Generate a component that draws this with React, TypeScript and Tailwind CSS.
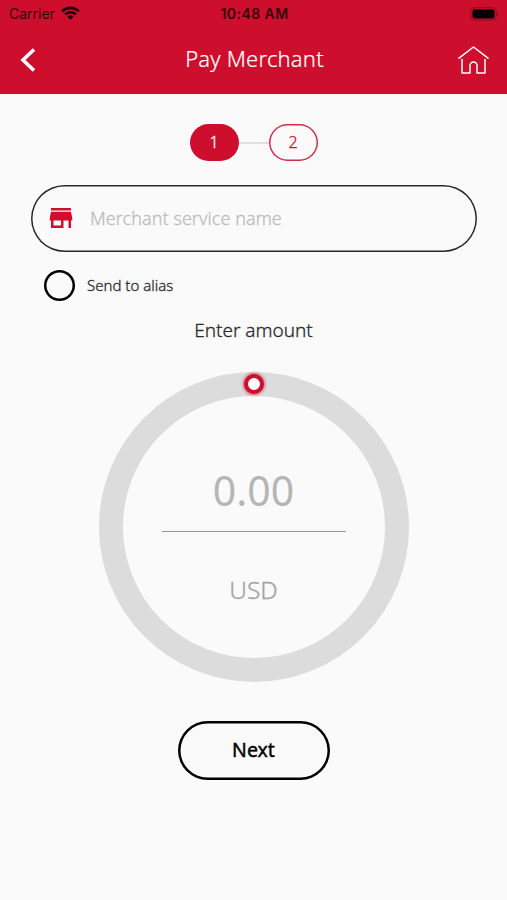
import { MdStore } from 'react-icons/md';
import { clsx } from 'clsx';

const STEPS = [1, 2] as const;

function StatusBar() {
  return (
    <div className="flex h-[27px] items-center justify-between pl-[9px] pr-[7px] font-['Inter',sans-serif] text-[14px] leading-none text-[#35050b]">
      <div className="flex flex-1 items-center gap-[6px]">
        <span>Carrier</span>
        <svg width="19" height="14" viewBox="0 0 19 14" fill="none" stroke="currentColor" strokeWidth="2.6" className="-mt-[2px] text-[#1c0306]">
          <path d="M1.2 5.3a11.8 11.8 0 0 1 16.6 0" />
          <path d="M4.2 8.4a7.5 7.5 0 0 1 10.6 0" />
          <path d="M9.5 13.8 6.5 10.7a4.3 4.3 0 0 1 6 0z" fill="currentColor" stroke="none" />
        </svg>
      </div>
      <span className="pt-px font-semibold tracking-[0.45px]">10:48 AM</span>
      <div className="flex flex-1 justify-end">
        <svg width="30" height="14" viewBox="0 0 30 14">
          <rect x="0.7" y="0.7" width="25.6" height="12.4" rx="3.6" fill="none" stroke="#8c0b20" strokeWidth="1" />
          <rect x="2.5" y="2.5" width="22" height="9" rx="2" fill="#000" />
          <path d="M27.6 4.8q2 2.2 0 4.4z" fill="#8c0b20" />
        </svg>
      </div>
    </div>
  );
}

function Header() {
  return (
    <header className="h-[94px] bg-[#cd0e2c]">
      <StatusBar />
      <div className="flex h-[65px] items-center justify-between pl-[20px] pr-[18px] text-white">
        <button aria-label="Back" className="flex w-[31px]">
          <svg width="16" height="26" viewBox="0 0 16 26" fill="none" stroke="currentColor" strokeWidth="3.6">
            <path d="M14 2.5 3 13l11 10.500" />
          </svg>
        </button>
        <h1 className="pb-[3px] text-[22px] font-light leading-none tracking-[0.2px] [-webkit-text-stroke:0.2px]">Pay Merchant</h1>
        <button aria-label="Home" className="flex w-[31px]">
          <svg width="31" height="30" viewBox="0 0 31 30" fill="none" stroke="currentColor" strokeWidth="1.5" strokeLinecap="round" strokeLinejoin="round">
            <path d="M1 13.2 15.5 2 30 13.2" />
            <path d="M4 14.5v13.5h8V20.5a3.5 3.5 0 0 1 7 0v7.5h8V14.5" />
          </svg>
        </button>
      </div>
    </header>
  );
}

function Stepper({ current }: { current: number }) {
  return (
    <div className="mt-[30px] flex items-center justify-center">
      {STEPS.map((step, i) => (
        <div key={step} className="flex items-center">
          {i > 0 && <div className="h-[2px] w-[30px] bg-[#dedede]" />}
          <div
            className={clsx(
              'flex h-[37px] w-[49px] items-center justify-center rounded-full pb-[2px] text-[16px] font-light leading-none [-webkit-text-stroke:0.3px]',
              step === current ? 'bg-[#cd0e2c] text-white' : 'text-[#cd0e2c] shadow-[inset_0_0_0_1.5px_#d02f49]'
            )}
          >
            {step}
          </div>
        </div>
      ))}
    </div>
  );
}

function AmountDial() {
  return (
    <div className="relative mx-auto mt-[30px] flex h-[310px] w-[310px] flex-col items-center rounded-full border-[24px] border-[#dcdcdc]">
      {/* Drag handle */}
      <div className="absolute -top-[22px] left-[121.5px] h-[20px] w-[20px] rounded-full border-[4px] border-[#cd0e2c] bg-white shadow-[0_0_3px_1px_rgba(205,14,44,0.6)]" />
      <div className="mt-[70px] flex h-[48px] items-center text-[41px] leading-none text-[#b5b5b5]">0.00</div>
      <div className="mt-[17px] h-px w-[184px] bg-[#959595]" />
      <div className="mt-[45px] flex h-[26px] items-center text-[24.5px] font-light leading-none text-[#a3a3a3] [-webkit-text-stroke:0.3px]">USD</div>
    </div>
  );
}

export default function App() {
  return (
    <div className="h-[900px] w-[507px] overflow-hidden bg-[#fafafa] font-['Noto_Sans',sans-serif]">
      <Header />
      <main className="flex flex-col">
        <Stepper current={1} />

        <div className="ml-[31px] mt-[24px] flex h-[67px] w-[446px] items-center rounded-full pb-px pl-[15px] shadow-[inset_0_0_0_1.5px_#2b2728]">
          <MdStore size={30} className="text-[#cd0e2c]" />
          <span className="ml-[14px] pb-px text-[18px] font-light leading-none tracking-[0.06px] text-[#bdbdbd] [-webkit-text-stroke:0.3px]">
            Merchant service name
          </span>
        </div>

        <label className="ml-[44px] mt-[18px] flex h-[31px] items-center gap-[12px]">
          <span className="h-[31px] w-[31px] rounded-full shadow-[inset_0_0_0_2.5px_#000]" />
          <span className="text-[15px] font-light leading-none text-[#2b2b2b] [-webkit-text-stroke:0.3px]">Send to alias</span>
        </label>

        <h2 className="mt-[18px] text-center text-[19px] font-light leading-[22px] text-[#2b2b2b] [-webkit-text-stroke:0.3px]">Enter amount</h2>

        <div className="pt-px">
          <AmountDial />
        </div>

        <button className="mx-auto mt-[39px] flex h-[59px] w-[152px] items-center justify-center rounded-full pb-[2px] text-[19.5px] font-normal leading-none text-black shadow-[inset_0_0_0_2.5px_#000] [-webkit-text-stroke:0.4px]">
          Next
        </button>
      </main>
    </div>
  );
}
